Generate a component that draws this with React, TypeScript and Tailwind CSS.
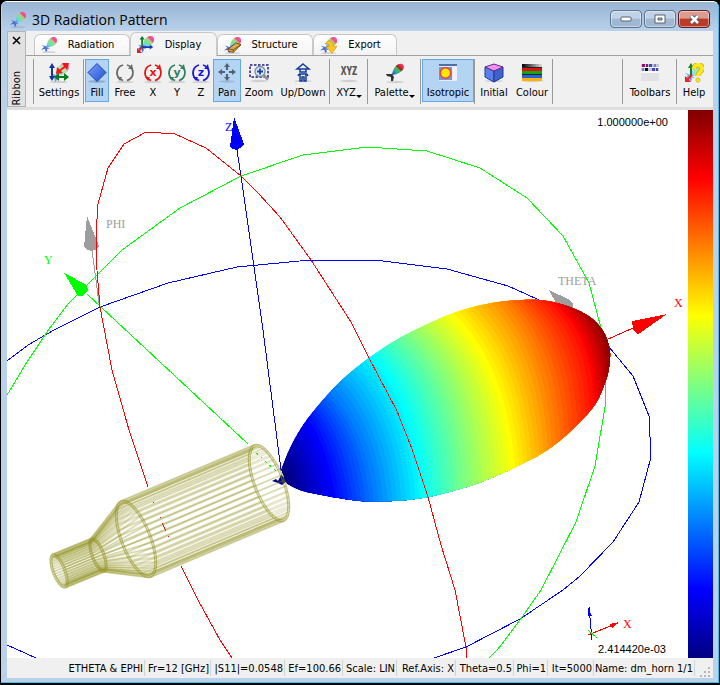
import { useId, useState } from 'react';
import type { ReactNode } from 'react';
import clsx from 'clsx';

type Pt = [number, number];

/* ---------- icons ---------- */

function Shadow({ y = 19 }: { y?: number }) {
  return <ellipse cx="10" cy={y} rx="9" ry="1.2" fill="#888" opacity=".3" />;
}

function LobeShape({ faded = false }: { faded?: boolean }) {
  const id = useId();
  return (
    <g opacity={faded ? 0.65 : 1}>
      <linearGradient id={id} x1="0" y1="1" x2="1" y2="0">
        <stop offset="0" stopColor="#3d7ae8" />
        <stop offset=".2" stopColor="#6fd0e8" />
        <stop offset=".45" stopColor="#7be87a" />
        <stop offset=".6" stopColor="#b4c89a" />
        <stop offset=".7" stopColor="#f0506a" />
        <stop offset=".9" stopColor="#ff4ac8" />
      </linearGradient>
      <path d="M7 13 C7 7 10 0 16 0 C21 0 21 6 18 9 C15 12 10 13 7 13Z" fill={`url(#${id})`} />
      <path d="M1 10 L7 12 L8 17 L6 19 L5 15 L0 16 L4 12.500Z" fill="#4a72cc" />
      <path d="M6 12 L11 15 L7 15Z" fill="#5b86d8" />
    </g>
  );
}

function Icon({ size = 20, children }: { size?: number; children: ReactNode }) {
  return (
    <svg width={size} height={size} viewBox="0 0 20 20" aria-hidden="true" className="shrink-0">
      {children}
    </svg>
  );
}

const LobeIcon = () => <Icon size={16}><Shadow /><LobeShape /></Icon>;

const DisplayIcon = () => (
  <Icon size={17}>
    <LobeShape />
    <g fill="none" strokeWidth="2">
      <path d="M6 14V3" stroke="#087a20" />
      <path d="M6 13H17" stroke="#1632c0" />
      <path d="M6 13L2 18" stroke="#f01818" />
    </g>
    <path d="M3 4L6 0L9 4Z" fill="#087a20" />
    <path d="M15 10L19 13L15 16Z" fill="#1632c0" />
    <path d="M0 14V20H6Z" fill="#f01818" />
  </Icon>
);

const StructureIcon = () => (
  <Icon size={17}>
    <Shadow /><LobeShape />
    <path d="M5 14L14 7L20 9L11 18L5 17Z" fill="#dfaa4c" stroke="#5d3810" />
    <path d="M5 14L11 15L20 9M11 15V18" fill="none" stroke="#6d4818" />
  </Icon>
);

const ExportIcon = () => (
  <Icon size={17}>
    <Shadow /><LobeShape />
    <path d="M6 8C9 3 15 3 16 11H20L14 19L7 11H11C11 8 9 7 6 8Z" fill="#ffc61a" stroke="#d18c00" strokeWidth=".7" />
  </Icon>
);

const SettingsIcon = () => (
  <Icon>
    <Shadow />
    <LobeShape faded />
    <path d="M3 4V14" stroke="#123a9c" strokeWidth="2" />
    <path d="M0 5L3 0L6 5ZM0 13L3 18L6 13Z" fill="#123a9c" />
    <path d="M8 14H17" stroke="#087a20" strokeWidth="2" />
    <path d="M10 10L5 14L10 18ZM15 10L20 14L15 18Z" fill="#087a20" />
    <path d="M10 8L17 3" stroke="#f51414" strokeWidth="2" />
    <path d="M13 0H20L18 7ZM8 4L7 11L14 10Z" fill="#f51414" />
  </Icon>
);

function FillIcon() {
  const id = useId();
  return (
    <Icon>
      <linearGradient id={id} x1="0" y1="0" x2="1" y2="1">
        <stop stopColor="#7fa0fa" /><stop offset="1" stopColor="#2050d0" />
      </linearGradient>
      <ellipse cx="10" cy="18.500" rx="9" ry="1.500" fill="#6e8aac" opacity=".5" />
      <path d="M10 .5L19 9.500L10 18.500L1 9.500Z" fill={`url(#${id})`} stroke="#1b40b4" />
    </Icon>
  );
}

function RotateIcon({ color, letter }: { color: string; letter?: string }) {
  return (
    <Icon>
      <Shadow />
      <g fill="none" stroke={color} strokeWidth="1.800">
        <path d="M8 2A8 8 0 0 0 4.500 15.500" />
        <path d="M12 17.500A8 8 0 0 0 15.500 4" />
        <path d="M12 2A8 8 0 0 1 15 3.500" />
        <path d="M8 17.500L5 16" />
      </g>
      <path d="M13 6L18 6L17 1Z" fill={color} />
      <path d="M2 14H7L5 18Z" fill={color} />
      {letter && (
        <text x="10" y="13" textAnchor="middle" fill={color} fontSize="11" fontWeight="bold" fontFamily="DejaVu Sans">
          {letter}
        </text>
      )}
    </Icon>
  );
}

const PanIcon = () => (
  <Icon>
    <ellipse cx="10" cy="18.500" rx="8" ry="1.200" fill="#7991ad" opacity=".4" />
    <g fill="#556273">
      <path d="M10 0L13 4H11V7H9V4H7ZM10 18L13 14H11V11H9V14H7Z" />
      <path d="M1 9L5 6V8H8V10H5V12ZM19 9L15 6V8H12V10H15V12Z" />
    </g>
  </Icon>
);

const ZoomIcon = () => (
  <Icon>
    <Shadow y={18} />
    <rect x="1" y="2" width="18" height="12" fill="none" stroke="#1b1d88" strokeWidth="1.500" strokeDasharray="2.500 1.500" />
    <circle cx="11" cy="8.500" r="5" fill="#d9e8fa" stroke="#798da8" strokeWidth="1.300" />
    <path d="M8 8.500H14M11 5.500V11.500" stroke="#194694" strokeWidth="1.800" />
    <path d="M14.500 12L19 16.500" stroke="#8b8d92" strokeWidth="2.500" />
  </Icon>
);

const UpDownIcon = () => (
  <Icon>
    <Shadow y={18} />
    <g fill="none" stroke="#123a9c" strokeWidth="1.500">
      <path d="M10 1L16 6H4ZM7 6V9H13V6M6 11H14M7 11V18H9V14H11V18H13V11" />
      <path d="M6 11L5 13M14 11L15 13" />
    </g>
  </Icon>
);

const XyzIcon = () => (
  <svg width="26" height="20" viewBox="0 0 26 20" aria-hidden="true" className="shrink-0">
    <ellipse cx="13" cy="18" rx="9" ry="1.200" fill="#888" opacity=".3" />
    <text x="13" y="12" textAnchor="middle" fill="#555" fontSize="12" fontWeight="bold" fontFamily="Liberation Sans Narrow, Open Sans Condensed, DejaVu Sans Condensed, sans-serif">
      XYZ
    </text>
  </svg>
);

function PaletteIcon() {
  const id = useId();
  return (
    <Icon>
      <linearGradient id={id} x1="0" y1="1" x2="1" y2="0">
        <stop stopColor="#273dcf" /><stop offset=".3" stopColor="#28a8a8" />
        <stop offset=".5" stopColor="#4abf46" /><stop offset=".62" stopColor="#79362c" />
        <stop offset=".75" stopColor="#e92532" /><stop offset="1" stopColor="#f83ec0" />
      </linearGradient>
      <Shadow />
      <path d="M7 12C8 5 12 0 17 1C21 3 19 10 7 12Z" fill={`url(#${id})`} />
      <path d="M1 11L7 11L9 14L8 18H6V14L2 13Z" fill="#333" />
    </Icon>
  );
}

const IsotropicIcon = () => (
  <Icon>
    <rect x="1" y="1" width="18" height="17" fill="#e8ecf6" />
    <rect x="1" y="1" width="18" height="2" fill="#516fa6" />
    <rect x="1" y="4" width="13" height="13" fill="#8392c5" />
    <rect x="15" y="4" width="4" height="13" fill="#f2f2f8" />
    <circle cx="7.500" cy="10" r="5.200" fill="#ffe900" stroke="#ec3e4a" strokeWidth="1.500" />
  </Icon>
);

const InitialIcon = () => (
  <Icon>
    <Shadow y={18} />
    <path d="M1 4L10 8V19L1 14Z" fill="#5b80e8" stroke="#1c399c" />
    <path d="M10 8L19 4V14L10 19Z" fill="#3f63cb" stroke="#1c399c" />
    <path d="M1 4L10 1L19 4L10 8Z" fill="#fb8cec" stroke="#53308c" />
  </Icon>
);

function ColourIcon() {
  const id = useId();
  return (
    <Icon>
      <linearGradient id={id}>
        <stop stopColor="#000" /><stop offset="1" stopColor="#ddd" />
      </linearGradient>
      <Shadow y={18} />
      <rect width="20" height="4" y="1" fill={`url(#${id})`} />
      <rect width="20" height="9" y="4" fill="#222" />
      <rect width="20" height="3" y="5" fill="#e01010" />
      <rect width="20" height="3" y="8" fill="#10a818" />
      <rect width="20" height="3" y="12" fill="#2464d8" />
      <rect width="20" height="3" y="15" fill="#ffb000" />
    </Icon>
  );
}

const ToolbarsIcon = () => (
  <Icon>
    <rect x="1" y="1" width="18" height="17" fill="#f7f7fa" />
    <rect x="1" y="1" width="18" height="3" fill="#c2c8dc" />
    <rect x="1" y="5" width="18" height="3" fill="#c2c8dc" />
    <path d="M2 1H5V4H2ZM6 1H8V4H6Z" fill="#8c1570" />
    <path d="M9 1H12V4H9ZM12 5H15V8H12ZM16 5H18V8H16Z" fill="#4545ba" />
    <path d="M5 5H8V8H5Z" fill="#111" />
    <path d="M2 5H4V8H2ZM14 1H16V4H14Z" fill="#7d7dae" />
    <rect x="1" y="10" width="18" height="8" fill="#e2e2e6" />
  </Icon>
);

const HelpIcon = () => (
  <Icon>
    <LobeShape faded />
    <path d="M7 13V3" stroke="#108030" strokeWidth="2" />
    <path d="M4 5L7 0L10 5Z" fill="#108030" />
    <path d="M8 12L3 17" stroke="#ef2020" strokeWidth="2" />
    <path d="M1 13V19H7Z" fill="#ef2020" />
    <path d="M10 6C10 0 19 1 18 6C18 9 14 9 14 13" fill="none" stroke="#c3a700" strokeWidth="5" />
    <path d="M10 6C10 0 19 1 18 6C18 9 14 9 14 13" fill="none" stroke="#ffe81c" strokeWidth="4" />
    <circle cx="14" cy="17" r="2.200" fill="#ffe81c" stroke="#c3a700" strokeWidth=".6" />
  </Icon>
);

/* ---------- ribbon ---------- */

type Tool = { label: string; icon: ReactNode; width: string; active?: boolean; menu?: boolean };

const groups: Tool[][] = [
  [{ label: 'Settings', icon: <SettingsIcon />, width: 'w-12' }],
  [
    { label: 'Fill', icon: <FillIcon />, width: 'w-6', active: true },
    { label: 'Free', icon: <RotateIcon color="#686868" />, width: 'w-8' },
    { label: 'X', icon: <RotateIcon color="#df1717" letter="x" />, width: 'w-6' },
    { label: 'Y', icon: <RotateIcon color="#308060" letter="y" />, width: 'w-6' },
    { label: 'Z', icon: <RotateIcon color="#1818d8" letter="z" />, width: 'w-6' },
    { label: 'Pan', icon: <PanIcon />, width: 'w-7', active: true },
    { label: 'Zoom', icon: <ZoomIcon />, width: 'w-9' },
    { label: 'Up/Down', icon: <UpDownIcon />, width: 'w-[52px]' },
  ],
  [{ label: 'XYZ', icon: <XyzIcon />, width: 'w-9', menu: true }],
  [{ label: 'Palette', icon: <PaletteIcon />, width: 'w-[51px]', menu: true }],
  [{ label: 'Isotropic', icon: <IsotropicIcon />, width: 'w-[52px]', active: true }],
  [
    { label: 'Initial', icon: <InitialIcon />, width: 'w-9' },
    { label: 'Colour', icon: <ColourIcon />, width: 'w-10' },
  ],
];

const rightGroups: Tool[][] = [
  [{ label: 'Toolbars', icon: <ToolbarsIcon />, width: 'w-[52px]' }],
  [{ label: 'Help', icon: <HelpIcon />, width: 'w-8' }],
];

function ToolGroup({ tools }: { tools: Tool[] }) {
  return (
    <div className="flex h-[45px] shrink-0 border-l border-[#999] pl-px">
      {tools.map((t) => (
        <button
          key={t.label}
          className={clsx(
            'flex h-[43px] shrink-0 flex-col items-center border pt-[3px]',
            t.width,
            t.active ? 'border-[#66a7e8] bg-[#b3d4f3]' : 'border-transparent',
          )}
        >
          {t.icon}
          <span className="flex items-end text-[11px] leading-[19px] whitespace-nowrap">
            {t.label}
            {t.menu && <span className="mb-1 border-x-[3px] border-t-[3px] border-x-transparent border-t-black" />}
          </span>
        </button>
      ))}
    </div>
  );
}

const tabs = [
  { label: 'Radiation', icon: <LobeIcon />, width: 'w-24' },
  { label: 'Display', icon: <DisplayIcon />, width: 'w-[87px]' },
  { label: 'Structure', icon: <StructureIcon />, width: 'w-24' },
  { label: 'Export', icon: <ExportIcon />, width: 'w-[84px]' },
];

function Ribbon() {
  const [tab, setTab] = useState('Display');
  return (
    <div className="flex bg-[#f0f0f0]">
      <div className="flex h-[76px] w-[19px] shrink-0 flex-col items-center justify-between border border-[#b4b4b4] bg-[#e1e1e1] pt-1">
        <button aria-label="Close ribbon">
          <svg width="9" height="9" viewBox="0 0 9 9"><path d="M1 1L8 8M8 1L1 8" stroke="#000" strokeWidth="1.500" /></svg>
        </button>
        <span className="rotate-180 text-[11px] leading-[14px] [writing-mode:vertical-rl]">Ribbon</span>
      </div>
      <div className="min-w-0 flex-1">
        <div role="tablist" className="flex h-[25px] items-end border-b border-[#a0a0a0] pl-2">
          {tabs.map((t) => (
            <button
              key={t.label}
              role="tab"
              aria-selected={tab === t.label}
              onClick={() => setTab(t.label)}
              className={clsx(
                'flex shrink-0 items-center rounded-t-md border border-b-0 border-[#c8c8c8] pr-1 pl-1.5 text-[11px]',
                t.width,
                tab === t.label ? '-mb-px h-6 bg-[#f4f4f4]' : 'h-[21px] bg-linear-to-b from-white to-[#f3f3f3]',
              )}
            >
              {t.icon}
              <span className="flex-1 pt-px text-center">{t.label}</span>
            </button>
          ))}
        </div>
        <div className="flex pt-[3px] pr-[3px] pl-[7px]">
          {groups.map((g) => <ToolGroup key={g[0].label} tools={g} />)}
          <div className="h-[45px] flex-1 border-l border-[#999]" />
          {rightGroups.map((g) => <ToolGroup key={g[0].label} tools={g} />)}
        </div>
      </div>
    </div>
  );
}

/* ---------- 3D view ---------- */

const LOBE: Pt[] = [
  [281, 470], [290, 448], [303, 425], [323, 400], [343, 379], [369, 358], [400, 338], [437, 320], [463, 310],
  [492, 303], [523, 300], [547, 301], [570, 307], [590, 317], [603, 331], [609, 346], [610, 358], [608, 373],
  [603, 388], [594, 406], [575, 427], [553, 446], [530, 460], [503, 473], [470, 486], [428, 497], [393, 501],
  [360, 501], [327, 496], [303, 491], [287, 484],
];

// Catmull-Rom spline through the points, left open at the apex
function smooth(pts: Pt[]) {
  let d = `M${pts[0][0]} ${pts[0][1]}`;
  for (let i = 0; i < pts.length - 1; i++) {
    const p0 = pts[Math.max(0, i - 1)];
    const [p1, p2] = [pts[i], pts[i + 1]];
    const p3 = pts[Math.min(pts.length - 1, i + 2)];
    const c = [0, 1].map((k) => p1[k] + (p2[k] - p0[k]) / 6);
    const e = [0, 1].map((k) => p2[k] - (p3[k] - p1[k]) / 6);
    d += `C${c[0].toFixed(1)} ${c[1].toFixed(1)} ${e[0].toFixed(1)} ${e[1].toFixed(1)} ${p2[0]} ${p2[1]}`;
  }
  return d + 'Z';
}

const OUTLINE = smooth(LOBE);

// top, middle and bottom of the surface line at every eighth of the colour scale
const LEVELS: [Pt, Pt, Pt][] = [
  [[279, 468], [284, 476], [285, 486]],
  [[306, 422], [321, 455], [331, 497]],
  [[331, 393], [360, 440], [374, 502]],
  [[370, 358], [404, 416], [420, 498]],
  [[407, 335], [447, 396], [463, 488]],
  [[448, 314], [491, 379], [511, 470]],
  [[503, 302], [537, 362], [552, 447]],
  [[553, 302], [583, 344], [594, 406]],
  [[600, 322], [609, 341], [611, 369]],
];

function jet(v: number) {
  const ch = (c: number) => Math.round(255 * Math.min(1, Math.max(0, 1.5 - Math.abs(4 * v - c))));
  return `rgb(${ch(3)},${ch(2)},${ch(1)})`;
}

function bandPath(v: number) {
  const i = Math.min(7, Math.floor(v * 8));
  const f = v * 8 - i;
  const [a, m, b] = [0, 1, 2].map((k) => [0, 1].map((c) => LEVELS[i][k][c] * (1 - f) + LEVELS[i + 1][k][c] * f));
  const at = (t: number, c: number) => {
    const ctrl = 2 * m[c] - (a[c] + b[c]) / 2;
    return (1 - t) * (1 - t) * a[c] + 2 * t * (1 - t) * ctrl + t * t * b[c];
  };
  const pts: string[] = [];
  for (let t = -0.2; t <= 1.21; t += 0.1) pts.push(`${at(t, 0).toFixed(1)} ${at(t, 1).toFixed(1)}`);
  return `M${pts.join('L')}L700 ${at(1.2, 1).toFixed(1)}L700 ${at(-0.2, 1).toFixed(1)}Z`;
}

const BANDS = Array.from({ length: 80 }, (_, i) => i / 80);

type Ring = { cx: number; cy: number; r: number };
const RINGS: Ring[] = [
  { cx: 59, cy: 571, r: 18 },
  { cx: 98, cy: 555, r: 18 },
  { cx: 136, cy: 539, r: 41 },
  { cx: 269, cy: 483, r: 41 },
];
const TILT = (68.7 * Math.PI) / 180;

function ringPoint({ cx, cy, r }: Ring, a: number): Pt {
  const u = r * Math.cos(a);
  const w = r * 0.375 * Math.sin(a);
  return [cx + u * Math.cos(TILT) - w * Math.sin(TILT), cy + u * Math.sin(TILT) + w * Math.cos(TILT)];
}

function Horn() {
  const lines: ReactNode[] = [];
  for (let s = 0; s < 3; s++) {
    for (let k = 0; k < 42; k++) {
      for (const d of [0, 2.5]) {
        const a = (k / 42) * Math.PI * 2;
        const p = ringPoint({ ...RINGS[s], r: RINGS[s].r - d }, a);
        const q = ringPoint({ ...RINGS[s + 1], r: RINGS[s + 1].r - d }, a);
        lines.push(<line key={`${s}-${k}-${d}`} x1={p[0]} y1={p[1]} x2={q[0]} y2={q[1]} />);
      }
    }
  }
  return (
    <g stroke="#8c8c14" fill="none">
      <g strokeWidth="1.500" strokeOpacity=".2">{lines}</g>
      {RINGS.map((r) => (
        <g key={r.cx} transform={`rotate(68.7 ${r.cx} ${r.cy})`}>
          <ellipse cx={r.cx} cy={r.cy} rx={r.r - 1} ry={r.r * 0.375 - 1} strokeWidth="3" strokeOpacity=".25" />
          <ellipse cx={r.cx} cy={r.cy} rx={r.r} ry={r.r * 0.375} strokeOpacity=".4" />
          <ellipse cx={r.cx} cy={r.cy} rx={r.r - 2.5} ry={r.r * 0.375 - 2} strokeOpacity=".4" />
        </g>
      ))}
    </g>
  );
}

function Scene() {
  return (
    <svg viewBox="7 110 681 548" className="h-auto min-w-0 flex-1 bg-white" role="img" aria-label="Radiation pattern">
      <clipPath id="lobe"><path d={OUTLINE} /></clipPath>
      <g fill="none" shapeRendering="crispEdges">
        <path stroke="#00f" d="M7 361L28 345L54 330L100 307L168 283L237 267L310 260L327 260L383 261L447 269L508 286L546 303M600 338L609 347L633 376L649 416L651 457L639 502L613 542L580 576L563 590L520 619L466 647L434 658M7 645L36 658" />
        <path stroke="#0f0" d="M7 395L27 362L49 329L68 304L87 285L122 250L180 208L241 176L303 155L367 147L427 151L480 168L527 198L563 236L589 283L601 328L605 383L605 407L595 466L576 522L541 590L520 620L498 649L489 658" />
        <path stroke="#0f0" d="M87 294L248 444" />
        <path stroke="#0f0" d="M252 449L277 472" strokeDasharray="2 4" />
        <path stroke="#00f" d="M237 150L241 176L263 330L281 470" />
        <path stroke="#9d9da0" d="M92 250L99 303" />
        <path stroke="#f00" d="M606 340L633 328" />
      </g>
      <g shapeRendering="crispEdges">
        <path fill="#00f" d="M234 117L230 147L233 149L237 150L242 147L244 144Z" />
        <path fill="#9d9da0" d="M87 216L84 247L87 250L92 251L97 249L99 246Z" />
        <path fill="#0f0" d="M64 273L87 285L88 290L83 296L78 296Z" />
        <path fill="#9d9da0" d="M549 290L568 299L573 303L573 310L556 303Z" />
        <path fill="#f00" d="M667 314L632 321L633 329L637 334L640 333Z" />
      </g>
      <g clipPath="url(#lobe)" shapeRendering="crispEdges">
        <path d={OUTLINE} fill={jet(0)} />
        {BANDS.map((v) => <path key={v} d={bandPath(v)} fill={jet(v)} />)}
      </g>
      <g fill="none" stroke="#f00" shapeRendering="crispEdges">
        <path d="M148 487L129 430L112 370L100 307L96 258L96 235L98 204L108 168L124 144L146 132L175 134L206 148L241 176L258 193L280 217L311 260L351 322L369 358L397 411L412 449L428 497L441 545L455 590L466 647L467 658" />
        <path d="M181 566L198 600L220 640L232 658" />
        <path d="M153 502L154 503M160 517L161 518M162 523L166 531M168 536L169 537" />
      </g>
      <path d="M272 481L276 479L278 481L281 475L288 480L282 485L278 483Z" fill="#000080" />
      <Horn />
      <g fontFamily="Liberation Serif, Times New Roman, serif" fontSize="12">
        <text x="106" y="228" fill="#9d9da0">PHI</text>
        <text x="558" y="285" fill="#9d9da0">THETA</text>
        <text x="44" y="264" fill="#0f0">Y</text>
        <text x="225" y="131" fill="#00f">Z</text>
        <text x="674" y="307" fill="#f00">X</text>
        <text x="623" y="628" fill="#f00">X</text>
      </g>
      <g fill="none" shapeRendering="crispEdges">
        <path stroke="#00f" d="M592 640L589 607" />
        <path stroke="#f00" d="M588 635L618 623" />
        <path stroke="#0f0" d="M588 630L597 638" />
        <path fill="#00f" d="M588 607L588 616L592 616Z" />
        <path fill="#f00" d="M619 622L610 624L612 628Z" />
      </g>
      <g fontFamily="Liberation Sans, Arial, sans-serif" fontSize="11" textAnchor="end">
        <text x="668" y="126">1.000000e+00</text>
        <text x="666" y="653">2.414420e-03</text>
      </g>
    </svg>
  );
}

/* ---------- window ---------- */

function TitleBar() {
  const box = 'flex h-[18px] w-8 items-center justify-center rounded-sm border shadow-[inset_0_0_0_1px_#ffffff70]';
  return (
    <header className="flex h-[29px] items-start bg-linear-to-b from-[#98b4d3] to-[#b9d1ea] px-2">
      <div className="flex flex-1 items-center gap-1.5 pt-[6px]">
        <LobeIcon />
        <h1 className="font-['Open_Sans','Noto_Sans',sans-serif] text-[14px] leading-6 whitespace-nowrap">3D Radiation Pattern</h1>
      </div>
      <div className="flex gap-0.5 pt-2">
        <button aria-label="Minimize" className={clsx(box, 'border-[#5d738e] bg-linear-to-b from-[#c0d2e6] from-45% to-[#9eb7d2] to-50%')}>
          <svg width="12" height="6" viewBox="0 0 12 6"><rect x="1" y="1" width="10" height="4" rx="1" fill="#fff" stroke="#56606f" /></svg>
        </button>
        <button aria-label="Maximize" className={clsx(box, 'border-[#5d738e] bg-linear-to-b from-[#c0d2e6] from-45% to-[#9eb7d2] to-50%')}>
          <svg width="12" height="10" viewBox="0 0 12 10"><path d="M1 1H11V9H1ZM4 4V6H8V4Z" fill="#fff" fillRule="evenodd" stroke="#56606f" /></svg>
        </button>
        <button aria-label="Close" className={clsx(box, 'border-[#5b1f24] bg-linear-to-b from-[#dc9c8f] from-45% to-[#bb3b28] to-50%')}>
          <svg width="13" height="11" viewBox="0 0 13 11">
            <path d="M3 2L10 9M10 2L3 9" stroke="#555b6d" strokeWidth="4.500" />
            <path d="M3 2L10 9M10 2L3 9" stroke="#fff" strokeWidth="2.500" />
          </svg>
        </button>
      </div>
    </header>
  );
}

const status = [
  { text: 'ETHETA & EPHI', width: 'w-20' },
  { text: 'Fr=12 [GHz]', width: 'w-[66px]' },
  { text: '|S11|=0.0548', width: 'w-[74px]' },
  { text: 'Ef=100.66', width: 'w-[58px]' },
  { text: 'Scale: LIN', width: 'w-[54px]' },
  { text: 'Ref.Axis: X', width: 'w-[59px]' },
  { text: 'Theta=0.5', width: 'w-[58px]' },
  { text: 'Phi=1', width: 'w-[34px]' },
  { text: 'It=5000', width: 'w-[46px]' },
  { text: 'Name: dm_horn 1/1', width: 'w-[101px]' },
];

function StatusBar() {
  return (
    <footer className="flex h-5 items-center justify-end bg-[#f0f0f0] text-[11px]">
      {status.map((s) => (
        <span key={s.text} className={clsx('flex h-4 shrink-0 items-center justify-end border-r border-[#d4d4d4] pt-0.5 pr-px whitespace-nowrap', s.width)}>
          {s.text}
        </span>
      ))}
      <svg width="18" height="18" viewBox="0 0 18 18" className="shrink-0 self-end" fill="#b8b8b8">
        <path d="M13 7h2v2h-2zM13 11h2v2h-2zM13 15h2v2h-2zM9 11h2v2h-2zM9 15h2v2h-2zM5 15h2v2h-2z" />
      </svg>
    </footer>
  );
}

export default function App() {
  return (
    <div className="min-h-screen bg-black p-px font-['DejaVu_Sans_Condensed','Noto_Sans',sans-serif] text-black">
      <div className="overflow-hidden rounded-t-md border-t border-r border-b border-t-white border-r-[#35c5ea] border-b-[#35c5ea] bg-[#b9d1ea] pb-1">
        <div className="pl-px"><TitleBar /></div>
        <main className="mr-[5px] ml-[6px]">
          <Ribbon />
          <div className="h-[3px] bg-[#dedede]" />
          <div className="flex">
            <Scene />
            <div className="w-[25px] shrink-0 bg-[linear-gradient(to_bottom,#800000,#ff0000_12.5%,#ffff00_37.5%,#00ffff_62.5%,#0000ff_87.5%,#000080)]" />
          </div>
          <StatusBar />
        </main>
      </div>
    </div>
  );
}
